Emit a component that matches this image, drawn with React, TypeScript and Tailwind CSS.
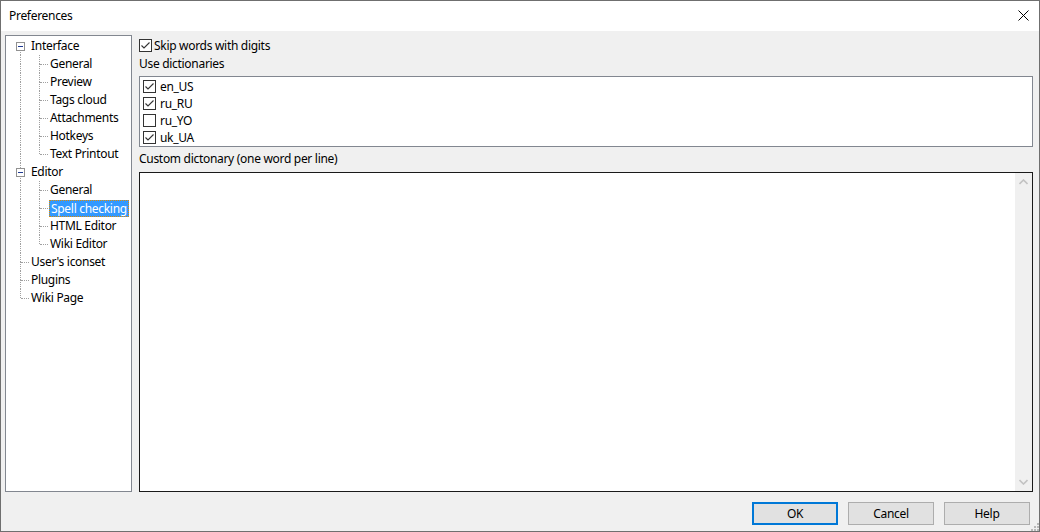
import React from 'react';

type Node = { label: string; level: 0 | 1; box?: boolean; last?: boolean; selected?: boolean; rootLast?: boolean };

// Root line runs until Wiki Page, child lines run until last child of each branch
const items: Node[] = [
  { label: 'Interface', level: 0, box: true },
  { label: 'General', level: 1 },
  { label: 'Preview', level: 1 },
  { label: 'Tags cloud', level: 1 },
  { label: 'Attachments', level: 1 },
  { label: 'Hotkeys', level: 1 },
  { label: 'Text Printout', level: 1, last: true },
  { label: 'Editor', level: 0, box: true },
  { label: 'General', level: 1 },
  { label: 'Spell checking', level: 1, selected: true },
  { label: 'HTML Editor', level: 1 },
  { label: 'Wiki Editor', level: 1, last: true },
  { label: "User's iconset", level: 0 },
  { label: 'Plugins', level: 0 },
  { label: 'Wiki Page', level: 0, rootLast: true },
];

const dots = 'border-[#a0a0a0] border-dotted';

function Cell({ up, down, across, box }: { up: boolean; down: boolean; across: boolean; box?: boolean }) {
  return (
    <div className="relative w-[19px] h-[18px] shrink-0">
      {up && <div className={`absolute left-[10px] top-0 h-[9px] border-l ${dots}`} />}
      {down && <div className={`absolute left-[10px] top-[9px] h-[9px] border-l ${dots}`} />}
      {across && <div className={`absolute left-[11px] top-[9px] w-[8px] border-t ${dots}`} />}
      {box && (
        <div className="absolute left-[6px] top-[5px] w-[9px] h-[9px] border border-[#919191] bg-white flex items-center justify-center">
          <div className="w-[5px] h-px bg-[#1f3a93]" />
        </div>
      )}
    </div>
  );
}

function Tree() {
  return (
    <div className="w-[127px] h-full border border-[#828790] bg-white pl-[4px] pt-[1px]">
      {items.map((it, i) => {
        const rootFirst = i === 0;
        return (
          <div key={i} className="flex items-center h-[18px]">
            {it.level === 0 ? (
              <Cell up={!rootFirst} down={!it.rootLast} across={!it.box} box={it.box} />
            ) : (
              <>
                <Cell up down across={false} />
                <Cell up down={!it.last} across />
              </>
            )}
            <span
              className={
                it.selected
                  ? 'ml-[1px] px-[1px] h-[17px] leading-[15px] bg-[#3399ff] text-white border border-dotted border-[#e08a00] whitespace-nowrap'
                  : 'ml-[2px] whitespace-nowrap'
              }
            >
              {it.label}
            </span>
          </div>
        );
      })}
    </div>
  );
}

function Check({ on }: { on: boolean }) {
  return (
    <div className="w-[13px] h-[13px] border border-[#333333] bg-white shrink-0 flex items-center justify-center">
      {on && (
        <svg width="11" height="11" viewBox="0 0 11 11">
          <path d="M1.5 5.5 L4 8 L9.5 2.5" fill="none" stroke="#333333" strokeWidth="1.1" />
        </svg>
      )}
    </div>
  );
}

const dictionaries = [
  { name: 'en_US', on: true },
  { name: 'ru_RU', on: true },
  { name: 'ru_YO', on: false },
  { name: 'uk_UA', on: true },
];

function Button({ label, primary }: { label: string; primary?: boolean }) {
  return (
    <button
      className={`w-[86px] h-[23px] bg-[#e1e1e1] flex items-center justify-center ${
        primary ? 'border-2 border-[#0078d7]' : 'border border-[#adadad]'
      }`}
    >
      {label}
    </button>
  );
}

export default function App() {
  return (
    <div className="w-[1040px] h-[532px] border border-[#6f6f6f] flex flex-col bg-[#f0f0f0] text-[12px] tracking-[-0.3px] text-black font-['Noto_Sans',sans-serif] select-none">
      <div className="h-[30px] bg-white flex items-center justify-between pl-[8px] pr-[10px] shrink-0">
        <span className="mt-[-1px]">Preferences</span>
        <svg width="11" height="11" viewBox="0 0 11 11" className="mt-[-2px]">
          <path d="M0.5 0.5 L10.5 10.5 M10.5 0.5 L0.5 10.5" stroke="#000" strokeWidth="1" />
        </svg>
      </div>

      <div className="flex-1 flex flex-col px-[4px] pt-[4px] relative">
        <div className="flex h-[457px] gap-[7px]">
          <Tree />
          <div className="flex-1 flex flex-col mr-[2px]">
            <div className="flex items-center gap-[2px] h-[19px] mt-[1px]">
              <Check on />
              <span>Skip words with digits</span>
            </div>
            <div className="h-[18px] flex items-center">Use dictionaries</div>
            <div className="mt-[3px] h-[71px] border border-[#828790] bg-white pl-[3px] pt-px">
              {dictionaries.map((d) => (
                <div key={d.name} className="flex items-center gap-[4px] h-[17px]">
                  <Check on={d.on} />
                  <span>{d.name}</span>
                </div>
              ))}
            </div>
            <div className="h-[18px] flex items-center mt-[3px]">Custom dictonary (one word per line)</div>
            <div className="mt-[4px] flex-1 border border-[#1a1a1a] bg-white flex justify-end">
              <div className="w-[17px] h-full bg-[#f0f0f0] flex flex-col justify-between items-center py-[6px]">
                <svg width="9" height="6" viewBox="0 0 9 6">
                  <path d="M0.5 5 L4.5 1 L8.5 5" fill="none" stroke="#c2c2c2" strokeWidth="1.6" />
                </svg>
                <svg width="9" height="6" viewBox="0 0 9 6">
                  <path d="M0.5 1 L4.5 5 L8.5 1" fill="none" stroke="#c2c2c2" strokeWidth="1.6" />
                </svg>
              </div>
            </div>
          </div>
        </div>

        <div className="flex justify-end gap-[10px] mt-[10px] mr-[5px]">
          <Button label="OK" primary />
          <Button label="Cancel" />
          <Button label="Help" />
        </div>

        <svg width="9" height="9" viewBox="0 0 9 9" className="absolute right-0 bottom-0">
          {[
            [7, 1],
            [7, 4],
            [4, 4],
            [7, 7],
            [4, 7],
            [1, 7],
          ].map(([x, y], i) => (
            <rect key={i} x={x} y={y} width="2" height="2" fill="#b8b8b8" />
          ))}
        </svg>
      </div>
    </div>
  );
}
